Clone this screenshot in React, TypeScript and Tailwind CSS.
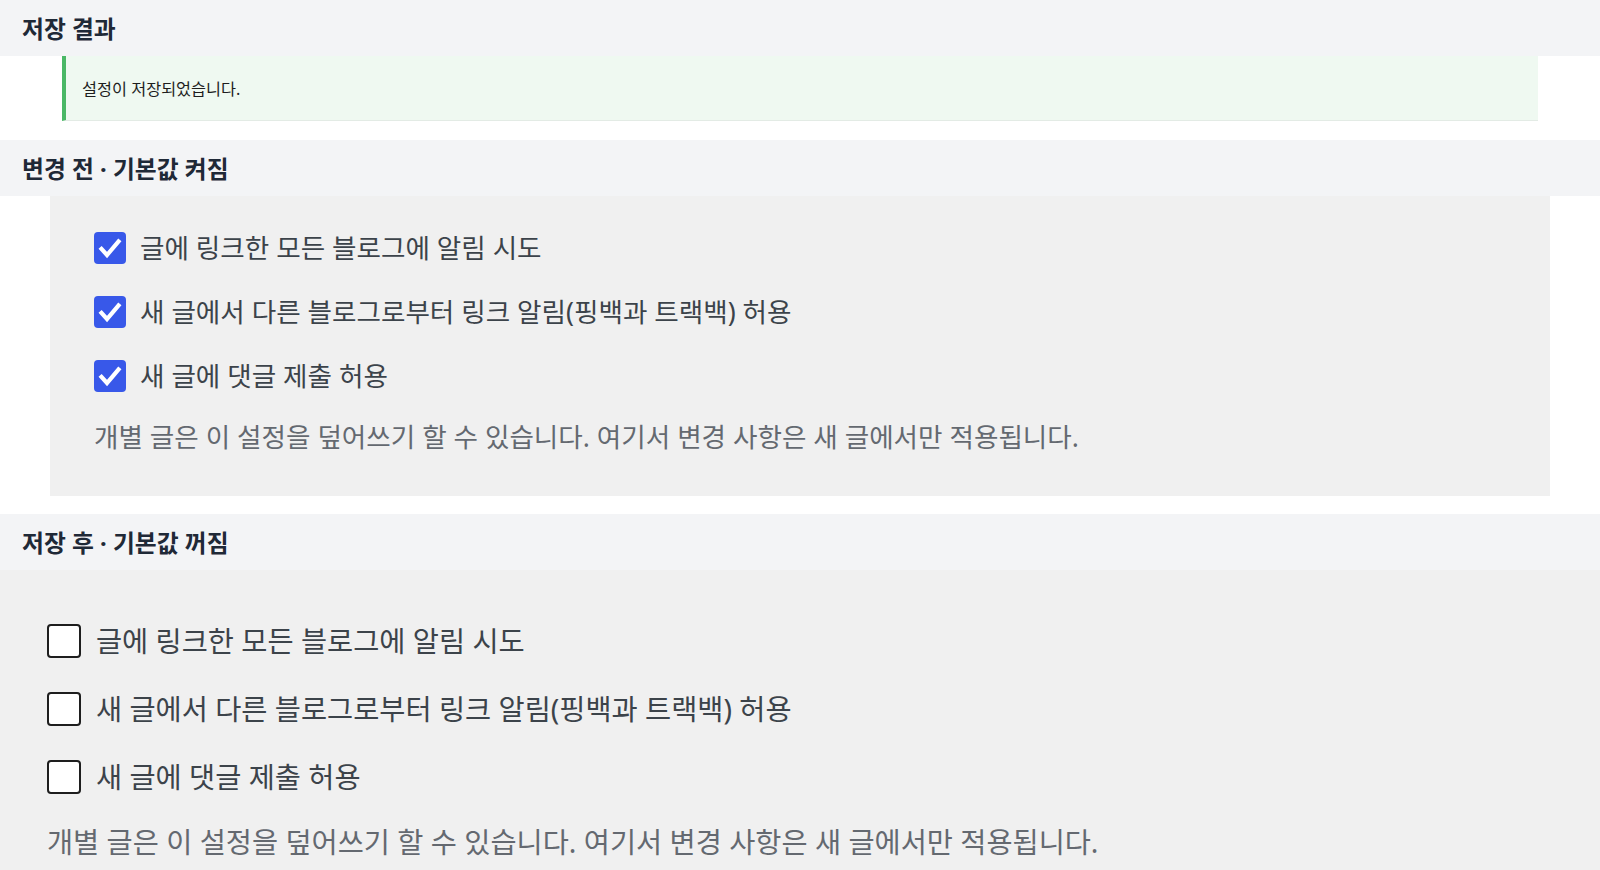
import React from "react";

const FONT = { fontFamily: '"Noto Sans", "Noto Sans CJK KR", sans-serif' };

function SectionHeader({ children }: { children: React.ReactNode }) {
  return (
    <div className="h-[56px] bg-[#f3f4f6] flex items-center pl-[22px] pt-[3px]">
      <h2 className="text-[23.8px] font-bold text-[#1f2937] leading-none">{children}</h2>
    </div>
  );
}

function Checked({ size }: { size: number }) {
  return (
    <span
      className="shrink-0 rounded-[4px] bg-[#3858e9] flex items-center justify-center"
      style={{ width: size, height: size }}
    >
      <svg viewBox="0 0 32 32" width={size} height={size}>
        <polyline
          points="7.5,17 13,23 24.5,9.5"
          fill="none"
          stroke="#fff"
          strokeWidth="4.2"
          strokeLinecap="square"
          strokeLinejoin="miter"
        />
      </svg>
    </span>
  );
}

function Unchecked({ size }: { size: number }) {
  return (
    <span
      className="shrink-0 rounded-[4px] border-2 border-[#1e1e1e] bg-white"
      style={{ width: size, height: size }}
    />
  );
}

const labels = [
  "글에 링크한 모든 블로그에 알림 시도",
  "새 글에서 다른 블로그로부터 링크 알림(핑백과 트랙백) 허용",
  "새 글에 댓글 제출 허용",
];
const help = "개별 글은 이 설정을 덮어쓰기 할 수 있습니다. 여기서 변경 사항은 새 글에서만 적용됩니다.";

export default function App() {
  return (
    <div className="w-[1600px] h-[870px] overflow-hidden bg-white" style={FONT}>
      <SectionHeader>저장 결과</SectionHeader>
      <div className="px-[62px] pb-[19px]">
        <div className="h-[65px] bg-[#eff9f1] border-l-4 border-[#4ab866] border-b border-b-[#e3ebe5] flex items-center pl-4 pt-[2px]">
          <p className="text-[16.3px] text-[#1e1e1e]">설정이 저장되었습니다.</p>
        </div>
      </div>

      <SectionHeader>변경 전 · 기본값 켜짐</SectionHeader>
      <div className="px-[50px] pb-[18px]">
        <div className="bg-[#f0f0f0] h-[300px] pt-[36px] pl-[44px]">
          <div className="flex flex-col gap-[32px]">
            {labels.map((l) => (
              <label key={l} className="flex items-center gap-[14px] h-[32px]">
                <Checked size={32} />
                <span className="text-[26.6px] text-[#3c434a] leading-none whitespace-nowrap">{l}</span>
              </label>
            ))}
          </div>
          <p className="mt-[27px] text-[26.6px] leading-[36px] text-[#646970] whitespace-nowrap">{help}</p>
        </div>
      </div>

      <SectionHeader>저장 후 · 기본값 꺼짐</SectionHeader>
      <div className="bg-[#f0f0f0] h-[300px] pt-[54px] pl-[47px]">
        <div className="flex flex-col gap-[34px]">
          {labels.map((l) => (
            <label key={l} className="flex items-center gap-[15px] h-[34px]">
              <Unchecked size={34} />
              <span className="text-[28.4px] text-[#3c434a] leading-none whitespace-nowrap">{l}</span>
            </label>
          ))}
        </div>
        <p className="mt-[29px] text-[28.4px] leading-[38px] text-[#646970] whitespace-nowrap">{help}</p>
      </div>
    </div>
  );
}
